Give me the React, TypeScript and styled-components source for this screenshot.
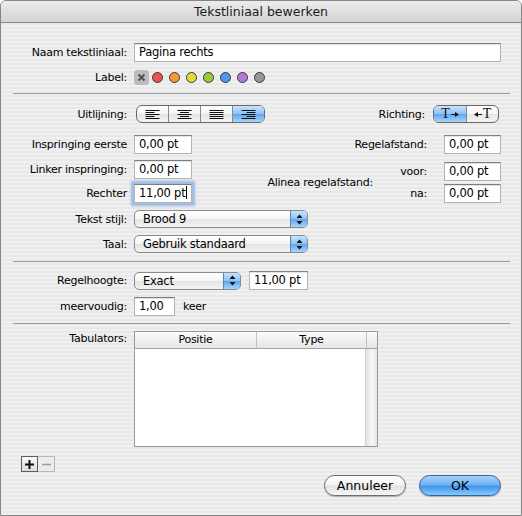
import styled, { createGlobalStyle } from 'styled-components';

const GlobalStyle = createGlobalStyle`
  html, body { margin: 0; padding: 0; background: #fff; }
  body {
    font-family: "DejaVu Sans", "Lucida Grande", sans-serif;
    font-size: 11px;
    letter-spacing: -0.25px;
    color: #000;
  }
`;

const aquaWhite = 'linear-gradient(#ffffff 0%, #f5f5f5 48%, #e4e4e4 52%, #f3f3f3 100%)';
const aquaBlue = 'linear-gradient(#c9e3fb 0%, #8ec3f5 48%, #5fa6ef 52%, #a6d6fb 100%)';

const Window = styled.div`
  width: 522px;
  height: 516px;
  box-sizing: border-box;
  border: 1px solid #858585;
  border-radius: 6px 6px 0 0;
  overflow: hidden;
  display: flex;
  flex-direction: column;
  background: repeating-linear-gradient(#f0f0f0 0 2px, #e8e8e8 2px 4px);
`;

const TitleBar = styled.div`
  height: 21px;
  line-height: 21px;
  flex-shrink: 0;
  text-align: center;
  font-size: 12.5px;
  letter-spacing: 0;
  color: #1c1c1c;
  border-bottom: 1px solid #8a8a8a;
  background: linear-gradient(#ececec, #d3d3d3);
`;

const Content = styled.div`
  display: flex;
  flex-direction: column;
  padding: 0 11px 0 12px;
`;

const Row = styled.div<{ $mt: number; $top?: boolean }>`
  display: flex;
  align-items: ${(p) => (p.$top ? 'flex-start' : 'center')};
  margin-top: ${(p) => p.$mt}px;
  padding-right: 9px;
`;

const Label = styled.div<{ $lh?: number }>`
  width: 114px;
  flex-shrink: 0;
  margin-right: 7px;
  text-align: right;
  white-space: nowrap;
  ${(p) => (p.$lh ? `line-height: ${p.$lh}px;` : '')}
`;

const SideLabel = styled.div`
  text-align: right;
  white-space: nowrap;
`;

const TextField = styled.div<{ $w?: number; $focus?: boolean; $ml?: number }>`
  ${(p) => (p.$w ? `width: ${p.$w}px;` : 'flex: 1;')}
  height: 19px;
  box-sizing: border-box;
  flex-shrink: 0;
  margin-left: ${(p) => p.$ml ?? 0}px;
  background: #fff;
  border: 1px solid #b3b3b3;
  border-top-color: #7d7d7d;
  box-shadow: ${(p) =>
    p.$focus
      ? '0 0 0 2px #9cc0ea, 0 0 2px 3px rgba(90, 140, 215, 0.55)'
      : 'inset 0 1px 0 #e2e2e2'};
  padding: 0 4px;
  line-height: 17px;
  font-size: 11.5px;
  white-space: nowrap;
`;

const Caret = styled.span`
  display: inline-block;
  width: 1px;
  height: 13px;
  background: #000;
  vertical-align: -2px;
  margin-left: 1px;
`;

const Separator = styled.div<{ $mt: number }>`
  height: 1px;
  background: #9c9c9c;
  margin-top: ${(p) => p.$mt}px;
`;

const Dots = styled.div`
  display: flex;
  align-items: center;
  height: 15px;
  gap: 6px;
`;

const ClearBox = styled.div`
  width: 15px;
  height: 15px;
  border-radius: 3px;
  background: #bdbdbd;
  display: flex;
  align-items: center;
  justify-content: center;
  margin-right: -3px;
`;

const Dot = styled.span<{ $c: string }>`
  width: 9px;
  height: 9px;
  border-radius: 50%;
  background: ${(p) => p.$c};
  border: 1px solid #3a3a3a;
`;

const Segmented = styled.div<{ $ml?: number }>`
  display: flex;
  height: 18px;
  box-sizing: border-box;
  border: 1px solid #6a6a6a;
  border-radius: 6px;
  overflow: hidden;
  margin-left: ${(p) => p.$ml ?? 0}px;
  background: ${aquaWhite};
`;

const Segment = styled.div<{ $w: number; $on?: boolean }>`
  width: ${(p) => p.$w}px;
  display: flex;
  align-items: center;
  justify-content: center;
  gap: 1px;
  background: ${(p) => (p.$on ? aquaBlue : 'transparent')};
  & + & {
    border-left: 1px solid #8a8a8a;
  }
`;

const DirGlyph = styled.span`
  font-family: "Liberation Serif", "DejaVu Serif", serif;
  font-size: 14px;
  letter-spacing: 0;
  line-height: 16px;
  color: #111;
`;

const TopBlock = styled.div`
  display: flex;
  align-items: flex-start;
  margin-top: 11px;
  padding-right: 9px;
`;

const LeftCol = styled.div`
  display: flex;
  flex-direction: column;
`;

const RightCol = styled.div`
  margin-left: auto;
  display: flex;
  flex-direction: column;
  align-items: flex-end;
`;

const SubRow = styled.div<{ $mt?: number; $gap: number; $mr?: number }>`
  display: flex;
  align-items: center;
  gap: ${(p) => p.$gap}px;
  margin-top: ${(p) => p.$mt ?? 0}px;
  margin-right: ${(p) => p.$mr ?? 0}px;
`;

const AlineaBlock = styled.div`
  display: flex;
  align-items: center;
  margin-top: 8px;
  gap: 20px;
`;

const SpacingGrid = styled.div`
  display: grid;
  grid-template-columns: 34px 57px;
  column-gap: 17px;
  row-gap: 3px;
  align-items: center;
`;

const Popup = styled.div<{ $w: number }>`
  width: ${(p) => p.$w}px;
  height: 18px;
  box-sizing: border-box;
  display: flex;
  border: 1px solid #8a8a8a;
  border-radius: 5px;
  overflow: hidden;
  background: ${aquaWhite};
  flex-shrink: 0;
`;

const PopupText = styled.div`
  flex: 1;
  padding-left: 8px;
  line-height: 16px;
  font-size: 11.5px;
  white-space: nowrap;
`;

const PopupArrows = styled.div`
  width: 16px;
  border-left: 1px solid #5d82b3;
  background: ${aquaBlue};
  display: flex;
  align-items: center;
  justify-content: center;
`;

const Unit = styled.span`
  margin-left: 8px;
`;

const Table = styled.div`
  width: 244px;
  height: 116px;
  box-sizing: border-box;
  border: 1px solid #9a9a9a;
  background: #fff;
  display: flex;
  flex-direction: column;
`;

const TableHead = styled.div`
  display: grid;
  grid-template-columns: 122px 110px 1fr;
  height: 16px;
  flex-shrink: 0;
  border-bottom: 1px solid #a3a3a3;
  background: linear-gradient(#fbfbfb, #e6e6e6);
`;

const HeadCell = styled.div`
  text-align: center;
  line-height: 16px;
  border-right: 1px solid #c2c2c2;
  &:last-child { border-right: none; }
`;

const TableBody = styled.div`
  flex: 1;
  display: flex;
`;

const TableRows = styled.div`
  flex: 1;
`;

const ScrollTrack = styled.div`
  width: 11px;
  border-left: 1px solid #d4d4d4;
  background: linear-gradient(90deg, #e2e2e2, #f7f7f7 50%, #e6e6e6);
`;

const PlusMinus = styled.div`
  display: flex;
  margin-top: 9px;
  margin-left: 8px;
`;

const SmallButton = styled.div<{ $off?: boolean }>`
  width: 17px;
  height: 16px;
  box-sizing: border-box;
  border: 1px solid ${(p) => (p.$off ? '#b8b8b8' : '#5e5e5e')};
  ${(p) => (p.$off ? 'border-left: none;' : '')}
  background: ${(p) => (p.$off ? '#ececec' : 'linear-gradient(#fafafa, #dcdcdc)')};
  display: flex;
  align-items: center;
  justify-content: center;
`;

const ButtonRow = styled.div`
  display: flex;
  justify-content: flex-end;
  gap: 13px;
  margin-top: 3px;
  padding-right: 9px;
`;

const AquaButton = styled.div<{ $primary?: boolean }>`
  width: 82px;
  height: 21px;
  box-sizing: border-box;
  border-radius: 11px;
  border: 1px solid ${(p) => (p.$primary ? '#34609c' : '#6c6c6c')};
  background: ${(p) =>
    p.$primary
      ? 'linear-gradient(#a6d2fa 0%, #6cb1f3 48%, #3f93ec 52%, #86c9fb 100%)'
      : 'linear-gradient(#ffffff 0%, #f3f3f3 48%, #e1e1e1 52%, #f7f7f7 100%)'};
  box-shadow: 0 1px 1px rgba(0, 0, 0, 0.25);
  text-align: center;
  line-height: 19px;
  font-size: 12.5px;
  letter-spacing: 0;
`;

type Align = 'left' | 'center' | 'justify' | 'right';

const AlignIcon = ({ kind }: { kind: Align }) => {
  const widths = [14, 9, 14, 9, 14];
  return (
    <svg width="15" height="9" viewBox="0 0 15 9">
      {widths.map((w, i) => {
        const len = kind === 'justify' ? 14 : w;
        const x = kind === 'left' || kind === 'justify' ? 0.5 : kind === 'right' ? 14.5 - len : 7.5 - len / 2;
        return <rect key={i} x={x} y={i * 2} width={len} height={1} fill="#111" />;
      })}
    </svg>
  );
};

const Arrow = ({ dir }: { dir: 'left' | 'right' }) => (
  <svg width="8" height="5" viewBox="0 0 8 5" style={{ transform: dir === 'left' ? 'scaleX(-1)' : undefined }}>
    <path d="M0 2.5 H5" stroke="#111" strokeWidth="1" />
    <path d="M4 0 L8 2.5 L4 5 Z" fill="#111" />
  </svg>
);

const UpDown = () => (
  <svg width="7" height="11" viewBox="0 0 7 11">
    <path d="M3.5 0.5 L6.5 4 L0.5 4 Z" fill="#111" />
    <path d="M0.5 7 L6.5 7 L3.5 10.5 Z" fill="#111" />
  </svg>
);

const ClearMark = () => (
  <svg width="9" height="9" viewBox="0 0 9 9">
    <path d="M1.5 1.5 L7.5 7.5 M7.5 1.5 L1.5 7.5" stroke="#505050" strokeWidth="2" />
  </svg>
);

const labelColors = ['#ee4f4f', '#f29b37', '#e3da35', '#9bcc36', '#4e96f0', '#b47bd4', '#969696'];

const App = (): JSX.Element => {
  return (
    <>
      <GlobalStyle />
      <Window>
        <TitleBar>Tekstliniaal bewerken</TitleBar>
        <Content>
          <Row $mt={20}>
            <Label>Naam tekstliniaal:</Label>
            <TextField>Pagina rechts</TextField>
          </Row>
          <Row $mt={8}>
            <Label>Label:</Label>
            <Dots>
              <ClearBox>
                <ClearMark />
              </ClearBox>
              {labelColors.map((c) => (
                <Dot key={c} $c={c} />
              ))}
            </Dots>
          </Row>

          <Separator $mt={8} />

          <TopBlock>
            <LeftCol>
              <SubRow $gap={0}>
                <Label>Uitlijning:</Label>
                <Segmented $ml={2}>
                  <Segment $w={31}><AlignIcon kind="left" /></Segment>
                  <Segment $w={31}><AlignIcon kind="center" /></Segment>
                  <Segment $w={31}><AlignIcon kind="justify" /></Segment>
                  <Segment $w={31} $on><AlignIcon kind="right" /></Segment>
                </Segmented>
              </SubRow>
              <SubRow $gap={0} $mt={12}>
                <Label>Inspringing eerste</Label>
                <TextField $w={58}>0,00 pt</TextField>
              </SubRow>
              <SubRow $gap={0} $mt={6}>
                <Label>Linker inspringing:</Label>
                <TextField $w={58}>0,00 pt</TextField>
              </SubRow>
              <SubRow $gap={0} $mt={5}>
                <Label>Rechter</Label>
                <TextField $w={58} $focus>
                  11,00 pt<Caret />
                </TextField>
              </SubRow>
            </LeftCol>

            <RightCol>
              <SubRow $gap={8} $mr={2}>
                <SideLabel>Richting:</SideLabel>
                <Segmented>
                  <Segment $w={32} $on>
                    <DirGlyph>T</DirGlyph>
                    <Arrow dir="right" />
                  </Segment>
                  <Segment $w={31}>
                    <Arrow dir="left" />
                    <DirGlyph>T</DirGlyph>
                  </Segment>
                </Segmented>
              </SubRow>
              <SubRow $gap={17} $mt={12}>
                <SideLabel>Regelafstand:</SideLabel>
                <TextField $w={57}>0,00 pt</TextField>
              </SubRow>
              <AlineaBlock>
                <SideLabel>Alinea regelafstand:</SideLabel>
                <SpacingGrid>
                  <SideLabel>voor:</SideLabel>
                  <TextField $w={57}>0,00 pt</TextField>
                  <SideLabel>na:</SideLabel>
                  <TextField $w={57}>0,00 pt</TextField>
                </SpacingGrid>
              </AlineaBlock>
            </RightCol>
          </TopBlock>

          <Row $mt={7}>
            <Label>Tekst stijl:</Label>
            <Popup $w={174}>
              <PopupText>Brood 9</PopupText>
              <PopupArrows><UpDown /></PopupArrows>
            </Popup>
          </Row>
          <Row $mt={7}>
            <Label>Taal:</Label>
            <Popup $w={174}>
              <PopupText>Gebruik standaard</PopupText>
              <PopupArrows><UpDown /></PopupArrows>
            </Popup>
          </Row>

          <Separator $mt={8} />

          <Row $mt={9}>
            <Label>Regelhoogte:</Label>
            <Popup $w={107}>
              <PopupText>Exact</PopupText>
              <PopupArrows><UpDown /></PopupArrows>
            </Popup>
            <TextField $w={59} $ml={8}>11,00 pt</TextField>
          </Row>
          <Row $mt={7}>
            <Label>meervoudig:</Label>
            <TextField $w={41}>1,00</TextField>
            <Unit>keer</Unit>
          </Row>

          <Separator $mt={7} />

          <Row $mt={7} $top>
            <Label $lh={16}>Tabulators:</Label>
            <Table>
              <TableHead>
                <HeadCell>Positie</HeadCell>
                <HeadCell>Type</HeadCell>
                <HeadCell />
              </TableHead>
              <TableBody>
                <TableRows />
                <ScrollTrack />
              </TableBody>
            </Table>
          </Row>

          <PlusMinus>
            <SmallButton>
              <svg width="9" height="9" viewBox="0 0 9 9">
                <path d="M4.5 0 V9 M0 4.5 H9" stroke="#111" strokeWidth="2" />
              </svg>
            </SmallButton>
            <SmallButton $off>
              <svg width="9" height="9" viewBox="0 0 9 9">
                <path d="M0 4.5 H9" stroke="#9a9a9a" strokeWidth="1.5" />
              </svg>
            </SmallButton>
          </PlusMinus>

          <ButtonRow>
            <AquaButton>Annuleer</AquaButton>
            <AquaButton $primary>OK</AquaButton>
          </ButtonRow>
        </Content>
      </Window>
    </>
  );
};

export default App;
